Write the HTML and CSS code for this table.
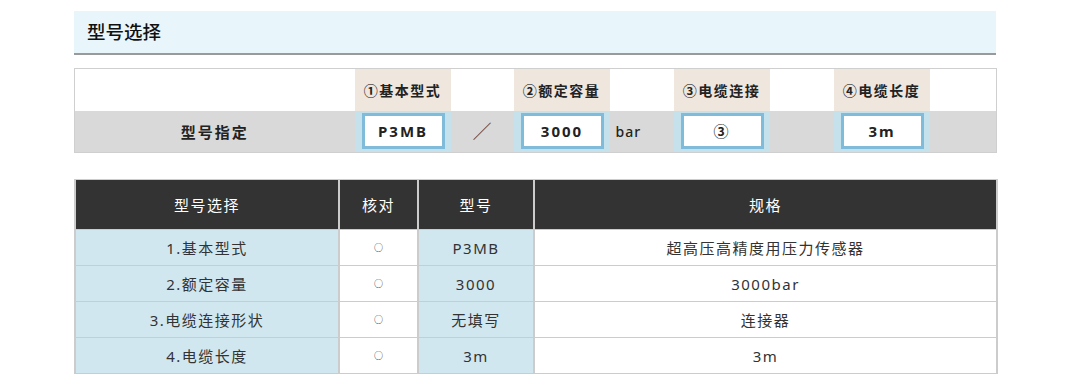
FILE: index.html
```html
<!DOCTYPE html>
<html lang="zh-CN">
<head>
<meta charset="utf-8">
<title>型号选择</title>
<link rel="stylesheet" href="styles.css">
</head>
<body>
<div class="page">
  <h2 class="section-title">型号选择</h2>

  <table class="model">
    <colgroup>
      <col class="c-label"><col class="c-field"><col class="c-sep1"><col class="c-field"><col class="c-sep"><col class="c-field"><col class="c-sep"><col class="c-field"><col class="c-end">
    </colgroup>
    <tr class="model-head">
      <td></td>
      <th class="field-head">①基本型式</th>
      <td></td>
      <th class="field-head">②额定容量</th>
      <td></td>
      <th class="field-head">③电缆连接</th>
      <td></td>
      <th class="field-head">④电缆长度</th>
      <td></td>
    </tr>
    <tr class="model-row">
      <th class="row-label">型号指定</th>
      <td class="field"><div class="box">P3MB</div></td>
      <td class="slash">／</td>
      <td class="field"><div class="box">3000</div></td>
      <td class="unit">bar</td>
      <td class="field"><div class="box">③</div></td>
      <td></td>
      <td class="field"><div class="box">3m</div></td>
      <td></td>
    </tr>
  </table>

  <table class="spec">
    <colgroup>
      <col class="s1"><col class="s2"><col class="s3"><col class="s4">
    </colgroup>
    <thead>
      <tr>
        <th>型号选择</th>
        <th>核对</th>
        <th>型号</th>
        <th>规格</th>
      </tr>
    </thead>
    <tbody>
      <tr>
        <td class="blue">1.基本型式</td>
        <td class="check">○</td>
        <td class="blue">P3MB</td>
        <td>超高压高精度用压力传感器</td>
      </tr>
      <tr>
        <td class="blue">2.额定容量</td>
        <td class="check">○</td>
        <td class="blue">3000</td>
        <td>3000bar</td>
      </tr>
      <tr>
        <td class="blue">3.电缆连接形状</td>
        <td class="check">○</td>
        <td class="blue">无填写</td>
        <td>连接器</td>
      </tr>
      <tr>
        <td class="blue">4.电缆长度</td>
        <td class="check">○</td>
        <td class="blue">3m</td>
        <td>3m</td>
      </tr>
    </tbody>
  </table>
</div>
</body>
</html>
```

FILE: styles.css
```css
* { box-sizing: border-box; }

body {
  margin: 0;
  background: #fff;
  color: #333;
  font-family: "Noto Sans", "Noto Sans CJK SC", sans-serif;
}

.page {
  width: 922px;
  margin: 11px 0 0 74px;
}

.section-title {
  margin: 0;
  height: 44px;
  padding: 0 0 0 13px;
  background: #e8f6fb;
  border-bottom: 2px solid #9a9a9a;
  font-size: 18.5px;
  font-weight: 500;
  line-height: 42px;
  color: #111;
}

/* model selection */
.model {
  margin-top: 13px;
  width: 922px;
  border-collapse: collapse;
  table-layout: fixed;
  border: 1px solid #cfcfcf;
}
.c-label { width: 280px; }
.c-field { width: 96px; }
.c-sep1 { width: 63px; }
.c-sep { width: 64px; }
.c-end { width: 67px; }

.model td, .model th { padding: 0; }

.model-head { height: 42px; background: #fff; }
.field-head {
  background: #efe6de;
  font-size: 14px;
  font-weight: bold;
  letter-spacing: 1.5px;
  color: #222;
  text-align: center;
  vertical-align: middle;
  padding-top: 2px;
}

.model-row { height: 41px; background: #d9d9d9; }
.row-label {
  font-size: 15px;
  font-weight: bold;
  letter-spacing: 2px;
  color: #222;
  text-align: center;
}
.field {
  background: #c5e1ec;
  padding: 2px 6px 3px 7px !important;
}
.box {
  height: 36px;
  background: #fff;
  border: 3px solid #80bcd9;
  font-size: 15px;
  font-weight: bold;
  letter-spacing: 2px;
  color: #222;
  text-align: center;
  line-height: 30px;
}
.slash {
  text-align: center;
  font-size: 19px;
  color: #333;
  font-weight: 300;
}
.unit {
  padding-left: 6px !important;
  font-size: 14px;
  font-weight: 500;
  letter-spacing: 1px;
  color: #222;
}

/* spec table */
.spec {
  margin-top: 26px;
  width: 922px;
  border-collapse: collapse;
  table-layout: fixed;
  border: 1px solid #cccccc;
}
.s1 { width: 264px; }
.s2 { width: 79px; }
.s3 { width: 116px; }
.s4 { width: 463px; }

.spec th, .spec td {
  text-align: center;
  font-size: 15px;
  letter-spacing: 1.5px;
  border-top: 1px solid #cccccc;
  border-bottom: 1px solid #cccccc;
  border-left: 2px solid #cccccc;
  border-right: 2px solid #cccccc;
}
.spec th {
  height: 50px;
  background: #333333;
  color: #fff;
  font-weight: normal;
  padding-top: 2px;
}
.spec td {
  height: 36px;
  color: #333;
  padding: 1px 0 0;
}
.spec td.blue { background: #d1e7f0; }
.spec td.check { font-size: 9px; letter-spacing: 0; }
```
